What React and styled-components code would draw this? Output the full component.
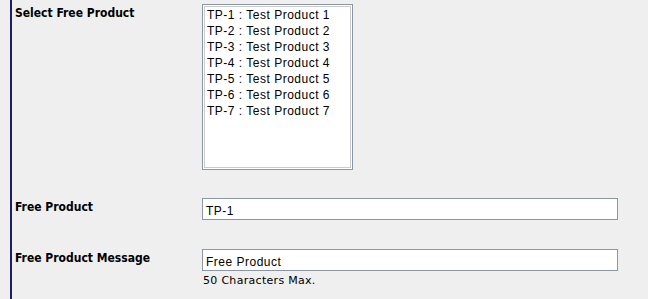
import React from "react";
import styled, { createGlobalStyle } from "styled-components";

const Global = createGlobalStyle`
  html, body { margin: 0; padding: 0; background: #efefef; }
  body { width: 648px; height: 299px; overflow: hidden; }
`;

const Panel = styled.div`
  margin-left: 10px;
  border-left: 2px solid #1c1c6b;
  height: 299px;
  box-sizing: border-box;
  padding: 4px 0 0 3px;
  display: flex;
  flex-direction: column;
`;

const Row = styled.div`
  display: grid;
  grid-template-columns: 187px 416px;
  align-items: start;
  margin-top: ${(p) => p.$mt || 0}px;
`;

const Label = styled.div`
  font-family: "DejaVu Sans Condensed", "DejaVu Sans", Verdana, sans-serif;
  font-weight: bold;
  font-size: 12px;
  color: #000;
  padding-top: 2px;
`;

const Field = styled.div`
  display: flex;
  flex-direction: column;
`;

const ListBox = styled.div`
  width: 151px;
  height: 166px;
  box-sizing: border-box;
  background: #fff;
  border: 1px solid #8a96a4;
  box-shadow: inset 0 0 0 1px #fff, inset 0 0 0 2px #c8ccd2;
  padding: 2px 0 0 4px;
  font-family: "Liberation Sans", Arial, sans-serif;
  font-size: 12px;
  letter-spacing: 0.5px;
  line-height: 16px;
  color: #000;
`;

const Option = styled.div`
  white-space: nowrap;
`;

const TextInput = styled.div`
  width: 416px;
  height: 22px;
  box-sizing: border-box;
  background: #fff;
  border: 1px solid #8c97a6;
  padding: 2px 3px 0;
  font-family: "Liberation Sans", Arial, sans-serif;
  font-size: 12px;
  letter-spacing: 0.5px;
  line-height: 20px;
  color: #000;
  overflow: hidden;
`;

const Hint = styled.div`
  font-family: "DejaVu Sans", Verdana, sans-serif;
  font-size: 11px;
  letter-spacing: 0.3px;
  color: #000;
  margin-top: 3px;
  padding-left: 1px;
`;

const products = [1, 2, 3, 4, 5, 6, 7];

export default function App() {
  return (
    <>
      <Global />
      <Panel>
        <Row>
          <Label>Select Free Product</Label>
          <Field>
            <ListBox>
              {products.map((n) => (
                <Option key={n}>{`TP-${n} : Test Product ${n}`}</Option>
              ))}
            </ListBox>
          </Field>
        </Row>
        <Row $mt={28}>
          <Label>Free Product</Label>
          <Field>
            <TextInput>TP-1</TextInput>
          </Field>
        </Row>
        <Row $mt={29}>
          <Label>Free Product Message</Label>
          <Field>
            <TextInput>Free Product</TextInput>
            <Hint>50 Characters Max.</Hint>
          </Field>
        </Row>
      </Panel>
    </>
  );
}
